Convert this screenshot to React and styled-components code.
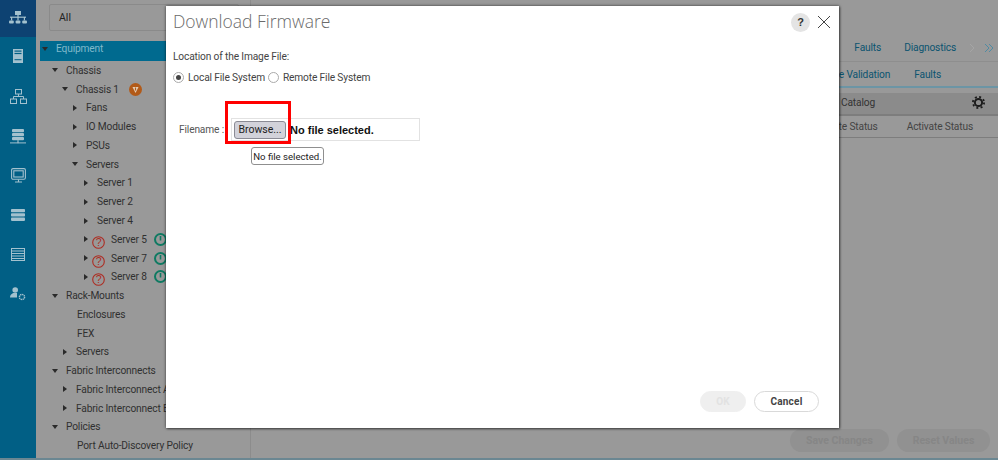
import React from "react";
import styled, { createGlobalStyle } from "styled-components";

const Global = createGlobalStyle`
  html, body { margin: 0; padding: 0; background: #999; overflow: hidden; }
  * { box-sizing: border-box; }
`;
const font = `Roboto, "Liberation Sans", sans-serif`;
const textStyle = `font-size: 10.2px; letter-spacing: -.15px;`;

const Page = styled.div`
  position: relative;
  width: 998px; height: 460px; overflow: hidden;
  display: flex; flex-direction: column;
  font-family: ${font}; background: #999;
`;
const Main = styled.div`flex: 1; min-height: 0; display: flex;`;
const BottomStrip = styled.div`height: 2px; background: #6b8792;`;

const Rail = styled.nav`
  width: 36px; flex: none; background: #015f85;
  display: flex; flex-direction: column; align-items: center;
`;
const RailItem = styled.div`
  width: 36px; height: ${p => p.$h || 39}px; flex: none;
  padding-bottom: ${p => p.$active ? 3 : 0}px;
  display: flex; align-items: center; justify-content: center;
  background: ${p => p.$active ? "#0d4272" : "transparent"};
  color: #a3c1ce;
`;

const TreePanel = styled.aside`
  width: 215px; flex: none; border-right: 1px solid #8c8c8c;
  padding: 4px 0 0 4px; display: flex; flex-direction: column; overflow: hidden;
`;
const Filter = styled.div`
  width: 190px; height: 27px; margin-left: 9px; flex: none;
  border: 1px solid #8a8a8a; border-radius: 2px;
  padding-left: 9px; display: flex; align-items: center;
  font-size: 10.5px; color: #222;
`;
const TreeRows = styled.div`margin-top: 10px; display: flex; flex-direction: column;`;
const Row = styled.div`
  height: 18.78px; flex: none; display: flex; align-items: center;
  padding-left: ${p => p.$indent}px; white-space: nowrap;
  ${textStyle} color: #303030;
`;
const SelectedRow = styled(Row)`
  height: 20px; background: #006a8f; color: #7fb9cb; padding-left: 3px; padding-bottom: 5px;
`;
const Caret = styled.span`
  width: 0; height: 0; flex: none; border-style: solid;
  ${p => p.$open
    ? "border-width: 4px 3px 0 3px; border-color: #2a2a2a transparent transparent transparent; margin-left: -1px; margin-right: 8px;"
    : `border-width: 3px 0 3px 4px; border-color: transparent transparent transparent #2a2a2a; margin-right: ${p.$tight ? 4 : 9}px;`}
`;
const RowIcon = styled.svg`
  flex: none;
  margin-left: ${p => p.$ml || 0}px; margin-right: ${p => p.$mr || 0}px; margin-top: ${p => p.$mt || 0}px;
`;

const Right = styled.section`
  flex: 1; min-width: 0; display: flex; flex-direction: column; align-items: stretch;
`;
const Tabs = styled.div`
  margin-top: 39px; height: 23px; padding-right: 3px;
  display: flex; align-items: flex-start; justify-content: flex-end;
  border-bottom: 1px solid #8e8e8e;
  ${textStyle} color: #0b5470;
`;
const Tab = styled.span`margin-left: ${p => p.$ml}px; line-height: 18px;`;
const Chevrons = styled.svg`margin-left: 13px; margin-top: 4px;`;
const SubTabs = styled.div`
  height: 26px; padding: 1px 57px 0 0; display: flex; justify-content: flex-end; align-items: center;
  border-bottom: 2px solid #6c95a5; ${textStyle} color: #0b5470;
`;
const CatalogBar = styled.div`
  margin-top: 5px; height: 23px; background: #8b8b8b; border-bottom: 2px solid #7d7d7d;
  display: flex; align-items: center; justify-content: space-between;
  padding: 0 13px 3px 590px; ${textStyle} color: #333;
`;
const Columns = styled.div`
  height: 22px; display: flex; justify-content: flex-end; align-items: center; gap: 29px; padding-right: 25px;
  border-bottom: 1px solid #7d7d7d; ${textStyle} color: #444;
`;
const Spacer = styled.div`flex: 1;`;
const BgActions = styled.div`
  display: flex; justify-content: flex-end; gap: 8px; padding: 0 8px 6px 0;
`;
const BgButton = styled.div`
  width: ${p => p.$w}px; height: 23px; border-radius: 12px; background: #919191;
  display: flex; align-items: center; justify-content: center;
  font-size: 10.5px; font-weight: 700; color: #868686;
`;

const Modal = styled.div`
  position: absolute; left: 166px; top: 6px; width: 673px; height: 422px;
  background: #fff; box-shadow: 0 0 3px rgba(0,0,0,.6), 1px 1px 2px rgba(0,0,0,.4);
  display: flex; flex-direction: column; padding: 0 20px 16px 7px;
`;
const ModalHead = styled.header`
  height: 32px; flex: none; display: flex; align-items: center; justify-content: space-between;
`;
const Title = styled.h1`
  margin: -3px 0 0; font-family: "Open Sans", sans-serif; font-weight: 300; font-size: 17.5px; color: #6a6a6a;
`;
const HeadTools = styled.div`display: flex; align-items: center; gap: 7px; margin-right: -12px;`;
const Help = styled.div`
  width: 19px; height: 19px; border-radius: 50%; background: #e4e4e4;
  display: flex; align-items: center; justify-content: center;
  font: 700 11px "Liberation Sans", sans-serif; color: #333;
`;
const Body = styled.div`flex: 1; padding-top: 12px;`;
const Label = styled.div`${textStyle} color: #444; line-height: 13px;`;
const Radios = styled.div`display: flex; align-items: center; margin-top: 8px; ${textStyle} color: #444; line-height: 13px;`;
const Radio = styled.span`
  width: 11px; height: 11px; border-radius: 50%; border: 1px solid #aaa; flex: none;
  margin-right: 4px; margin-left: ${p => p.$ml || 0}px; display: flex; align-items: center; justify-content: center;
  &::after { content: ""; display: ${p => p.$on ? "block" : "none"}; width: 5px; height: 5px; border-radius: 50%; background: #444; }
`;
const FileRow = styled.div`
  position: relative; display: flex; align-items: center; margin: 34px 0 0 6px;
`;
const FileLabel = styled.span`width: 52px; ${textStyle} color: #555; flex: none; white-space: pre;`;
const FileBox = styled.div`
  width: 189px; height: 23px; border: 1px solid #e2e2e2; display: flex; align-items: center; padding-left: 2px;
`;
const Browse = styled.button`
  width: 52px; height: 18px; padding: 0; border: 1px solid #8b8b95; border-radius: 3px;
  background: #d2d2da; font: 10.5px ${font}; color: #222;
`;
const NoFile = styled.span`margin-left: 4px; font: 700 11px "Liberation Sans", sans-serif; color: #111; white-space: nowrap;`;
const RedBox = styled.div`
  position: absolute; left: 46px; top: -17px; width: 66px; height: 43px; border: 3px solid #f00; pointer-events: none;
`;
const Tip = styled.div`
  position: absolute; left: 72px; top: 29px; width: 73px; height: 18px; border: 1px solid #8f8f8f; border-radius: 3px;
  background: #fff; display: flex; align-items: center; justify-content: center;
  font: 9.6px ${font}; color: #222; white-space: nowrap;
`;
const Footer = styled.footer`display: flex; justify-content: flex-end; gap: 8px; flex: none;`;
const Btn = styled.button`
  height: 21px; width: ${p => p.$w}px; border-radius: 11px; padding: 0;
  border: 1px solid ${p => p.$off ? "#efefef" : "#d9d9d9"};
  background: ${p => p.$off ? "#efefef" : "#fff"};
  color: ${p => p.$off ? "#e2e2e2" : "#444"};
  font: 700 10px ${font}; letter-spacing: .2px;
`;

const S = { fill: "none", stroke: "currentColor" };

const TreeIcon = () => (
  <svg width="18" height="13" viewBox="0 0 18 13" fill="currentColor"><rect x="6" y="0" width="6" height="4" /><rect x="1" y="5.6" width="16" height="1.2" /><rect x="8.4" y="4" width="1.2" height="3" /><rect x="2" y="6" width="1.2" height="3.4" /><rect x="8.4" y="6" width="1.2" height="3.4" /><rect x="14.8" y="6" width="1.2" height="3.4" /><rect x="0" y="9.4" width="4.8" height="3.2" rx="1" /><rect x="6.6" y="9.4" width="4.8" height="3.2" rx="1" /><rect x="13.2" y="9.4" width="4.8" height="3.2" rx="1" /></svg>
);
const ServerIcon = () => (
  <svg width="10" height="14" viewBox="0 0 10 14"><rect width="10" height="14" fill="#a3c1ce" /><rect x="1.5" y="1.5" width="7" height="1.2" fill="#015f85" /><rect x="1.5" y="3.9" width="7" height="1.2" fill="#015f85" /><rect x="1.5" y="10.2" width="7" height="1" fill="#015f85" /></svg>
);
const NetIcon = () => (
  <svg width="17" height="15" viewBox="0 0 17 15" {...S}><rect x="5.5" y=".5" width="6" height="4.5" /><rect x=".5" y="10" width="6" height="4.5" /><rect x="10.5" y="10" width="6" height="4.5" /><path d="M8.5 5v2.5M3.5 10V7.5h10V10" /></svg>
);
const StackIcon = () => (
  <svg width="16" height="15" viewBox="0 0 16 15" fill="currentColor"><rect x="2" y="0" width="12" height="3.2" rx="1" /><rect x="2" y="4" width="12" height="3.2" rx="1" /><rect x="2" y="8" width="12" height="3.2" rx="1" /><rect x="7.4" y="11.2" width="1.2" height="3" /><rect x="0" y="13.4" width="16" height="1" /></svg>
);
const MonitorIcon = () => (
  <svg width="15" height="15" viewBox="0 0 15 15" {...S} strokeWidth="1.1"><rect x=".6" y=".6" width="13.8" height="10.6" rx="1.4" /><rect x="2.8" y="2.8" width="9.4" height="6.2" /><path d="M4 14h7M7.5 11.5V14" /></svg>
);
const BladesIcon = () => (
  <svg width="14" height="12" viewBox="0 0 14 12" fill="currentColor"><rect width="14" height="3.3" rx=".8" /><rect y="4.3" width="14" height="3.3" rx=".8" /><rect y="8.6" width="14" height="3.3" rx=".8" /></svg>
);
const ListIcon = () => (
  <svg width="14" height="13" viewBox="0 0 14 13" {...S}><rect x=".5" y=".5" width="13" height="12" /><path d="M.5 3h13M.5 5.5h13M.5 8h13M.5 10.5h13" /></svg>
);
const AdminIcon = () => (
  <svg width="16" height="14" viewBox="0 0 16 14"><circle cx="5.2" cy="3" r="2.8" fill="currentColor" /><path d="M0 10.5c0-3 2.5-4.5 4-4.5h3v4.5z" fill="currentColor" /><circle cx="12" cy="10" r="2.6" fill="none" stroke="currentColor" strokeWidth="1.4" strokeDasharray="1.4 .6" /></svg>
);
const Warn = () => (
  <RowIcon $ml={10} width="13" height="13" viewBox="0 0 13 13"><circle cx="6.5" cy="6.5" r="6.5" fill="#b25a18" /><path d="M3.5 4h6L6.5 10z" fill="#e4d0b8" /><path d="M6.5 4.5v3" stroke="#b25a18" strokeWidth="1.2" /></RowIcon>
);
const Question = () => (
  <RowIcon $mr={6} $mt={6} width="13" height="13" viewBox="0 0 13 13"><circle cx="6.5" cy="6.5" r="5.8" fill="none" stroke="#ad2c22" strokeWidth="1.1" /><text x="6.5" y="10" textAnchor="middle" fontSize="10.5" fontFamily="Liberation Sans" fill="#ad2c22">?</text></RowIcon>
);
const Up = () => (
  <RowIcon $ml={7} width="13" height="13" viewBox="0 0 13 13"><circle cx="6.5" cy="6.5" r="5.5" fill="none" stroke="#0f7a62" strokeWidth="2" /><path d="M6.5 3v4.5" stroke="#0f7a62" strokeWidth="1.6" /></RowIcon>
);

const rows = [
  { t: "Chassis", i: 13, c: "open" },
  { t: "Chassis 1", i: 23, c: "open", warn: 1 },
  { t: "Fans", i: 33, c: "closed" },
  { t: "IO Modules", i: 33, c: "closed" },
  { t: "PSUs", i: 33, c: "closed" },
  { t: "Servers", i: 33, c: "open" },
  { t: "Server 1", i: 44, c: "closed" },
  { t: "Server 2", i: 44, c: "closed" },
  { t: "Server 4", i: 44, c: "closed" },
  { t: "Server 5", i: 44, c: "closed", bad: 1 },
  { t: "Server 7", i: 44, c: "closed", bad: 1 },
  { t: "Server 8", i: 44, c: "closed", bad: 1 },
  { t: "Rack-Mounts", i: 13, c: "open" },
  { t: "Enclosures", i: 37 },
  { t: "FEX", i: 37 },
  { t: "Servers", i: 23, c: "closed" },
  { t: "Fabric Interconnects", i: 13, c: "open" },
  { t: "Fabric Interconnect A", i: 23, c: "closed" },
  { t: "Fabric Interconnect B", i: 23, c: "closed" },
  { t: "Policies", i: 13, c: "open" },
  { t: "Port Auto-Discovery Policy", i: 37 },
];

export default function App() {
  return (
    <Page>
      <Global />
      <Main>
        <Rail>
          <RailItem $active $h={37}><TreeIcon /></RailItem>
          <RailItem $h={38}><ServerIcon /></RailItem>
          <RailItem $h={42}><NetIcon /></RailItem>
          <RailItem $h={38}><StackIcon /></RailItem>
          <RailItem $h={40}><MonitorIcon /></RailItem>
          <RailItem $h={40}><BladesIcon /></RailItem>
          <RailItem $h={38}><ListIcon /></RailItem>
          <RailItem $h={42}><AdminIcon /></RailItem>
        </Rail>
        <TreePanel>
          <Filter>All</Filter>
          <TreeRows>
            <SelectedRow $indent={3}><Caret $open />Equipment</SelectedRow>
            {rows.map((r, i) => (
              <Row key={i} $indent={r.i}>
                {r.c && <Caret $open={r.c === "open"} $tight={r.bad} />}
                {r.bad && <Question />}
                {r.t}
                {r.warn && <Warn />}
                {r.bad && <Up />}
              </Row>
            ))}
          </TreeRows>
        </TreePanel>
        <Right>
          <Tabs>
            <Tab $ml={0}>Faults</Tab>
            <Tab $ml={23}>Diagnostics</Tab>
            <Chevrons width="26" height="10" viewBox="0 0 26 10" fill="none">
              <path d="M1 1l4 4-4 4" stroke="#a5a5a5" />
              <path d="M16 1l4 4-4 4M20 1l4 4-4 4" stroke="#4f8ba3" />
            </Chevrons>
          </Tabs>
          <SubTabs>
            <Tab $ml={0}>Image Validation</Tab>
            <Tab $ml={24}>Faults</Tab>
          </SubTabs>
          <CatalogBar>
            <span>Catalog</span>
            <svg width="13" height="13" viewBox="0 0 13 13"><circle cx="6.5" cy="6.5" r="3.6" fill="none" stroke="#1c1c1c" strokeWidth="2" /><circle cx="6.5" cy="6.5" r="5.6" fill="none" stroke="#1c1c1c" strokeWidth="1.8" strokeDasharray="2 2.4" /></svg>
          </CatalogBar>
          <Columns>
            <span>Activate Status</span>
            <span>Activate Status</span>
          </Columns>
          <Spacer />
          <BgActions>
            <BgButton $w={99}>Save Changes</BgButton>
            <BgButton $w={93}>Reset Values</BgButton>
          </BgActions>
        </Right>
      </Main>
      <BottomStrip />
      <Modal>
        <ModalHead>
          <Title>Download Firmware</Title>
          <HeadTools>
            <Help>?</Help>
            <svg width="14" height="14" viewBox="0 0 14 14" stroke="#444" strokeWidth="1"><path d="M1 1l12 12M13 1L1 13" /></svg>
          </HeadTools>
        </ModalHead>
        <Body>
          <Label>Location of the Image File:</Label>
          <Radios>
            <Radio $on />Local File System
            <Radio $ml={3} />Remote File System
          </Radios>
          <FileRow>
            <FileLabel>Filename :</FileLabel>
            <FileBox>
              <Browse>Browse...</Browse>
              <NoFile>No file selected.</NoFile>
            </FileBox>
            <RedBox />
            <Tip>No file selected.</Tip>
          </FileRow>
        </Body>
        <Footer>
          <Btn $off $w={46}>OK</Btn>
          <Btn $w={65}>Cancel</Btn>
        </Footer>
      </Modal>
    </Page>
  );
}
